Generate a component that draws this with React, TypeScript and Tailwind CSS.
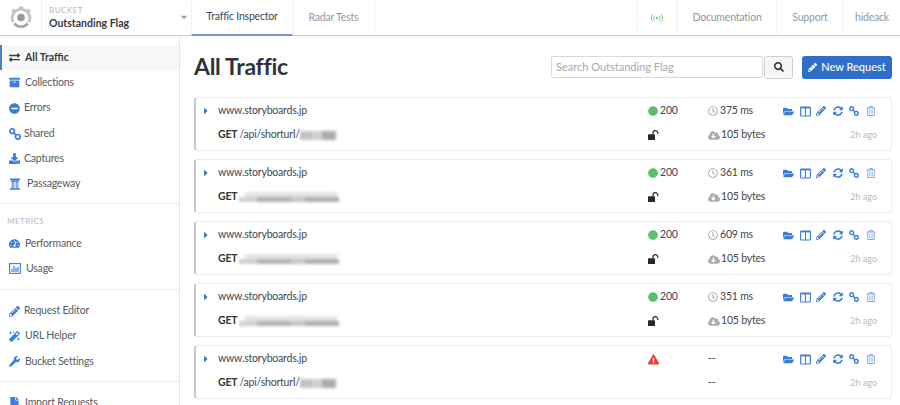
import React from "react";
import {
  FaExchangeAlt, FaArchive, FaMinusCircle, FaDownload, FaPencilAlt, FaSyncAlt,
  FaRegTrashAlt, FaFolderOpen, FaSearch, FaMagic, FaWrench, FaTachometerAlt,
  FaCloudDownloadAlt, FaRegClock, FaExclamationTriangle, FaCaretRight, FaCaretDown, FaFile, FaCircle,
} from "react-icons/fa";

function Logo() {
  return (
    <svg width="24" height="24" viewBox="0 0 24 24">
      <path d="M3.2 17 A10 10 0 0 1 3.5 6.2 L2.2 4.6 L5 2.4 L6.3 3.8 A10 10 0 0 1 9.6 2.3 L9.8 0.6 L14.2 0.6 L14.4 2.3 A10 10 0 0 1 17.7 3.8 L19 2.4 L21.8 4.6 L20.5 6.2 A10 10 0 0 1 20.8 17 L18.4 15.6 A7.4 7.4 0 1 0 5.6 15.6 Z" fill="#c4c4c1" />
      <path d="M4.2 18.4 A10.5 10.5 0 0 0 19.8 18.4 L17.8 16.6 A7.6 7.6 0 0 1 6.2 16.6 Z" fill="#a3a3a0" />
      <circle cx="12" cy="11.5" r="3.8" fill="#999996" />
    </svg>
  );
}

function Radio() {
  return (
    <svg width="12" height="10" viewBox="0 0 12 10" fill="none" stroke="#7fce8d" strokeWidth="1">
      <circle cx="6" cy="5" r="1.2" fill="#7fce8d" stroke="none" />
      <path d="M3.8 2.6a3.4 3.4 0 0 0 0 4.8M8.2 2.6a3.4 3.4 0 0 1 0 4.8M2 1a5.6 5.6 0 0 0 0 8M10 1a5.6 5.6 0 0 1 0 8" />
    </svg>
  );
}

function Chain({ size = 10 }: { size?: number }) {
  return (
    <svg width={size} height={size} viewBox="0 0 12 12" fill="none" stroke="currentColor" strokeWidth="1.7">
      <circle cx="3.2" cy="3.2" r="2.3" />
      <circle cx="8.8" cy="8.8" r="2.3" />
      <path d="M4.8 4.8l2.4 2.4" />
    </svg>
  );
}

function Cols() {
  return (
    <svg width="11" height="11" viewBox="0 0 11 11" fill="none" stroke="currentColor" strokeWidth="1.1">
      <rect x="0.6" y="1" width="9.8" height="9" rx="0.8" />
      <path d="M5.5 1v9" />
      <path d="M0.6 1.7h9.8" strokeWidth="1.4" />
    </svg>
  );
}

function Gate() {
  return (
    <svg width="12" height="12" viewBox="0 0 12 12" fill="none" stroke="currentColor" strokeWidth="1.1">
      <path d="M1 1.2h10M1 11h10M2 3h8" strokeWidth="1.4" />
      <path d="M3.2 3v8M4.8 3v8M7.2 3v8M8.8 3v8" strokeWidth="0.9" />
    </svg>
  );
}

function UsageIcon() {
  return (
    <svg width="12" height="11" viewBox="0 0 12 11" fill="none" stroke="currentColor">
      <rect x="0.6" y="0.6" width="10.8" height="9.8" strokeWidth="1.1" />
      <path d="M3 9V6M5 9V3M7 9V5M9 9V4" strokeWidth="1.2" />
    </svg>
  );
}

function OpenLock() {
  return (
    <svg width="11" height="10" viewBox="0 0 11 10" fill="#25292c">
      <rect x="0" y="4.2" width="7" height="5.8" rx="0.6" />
      <path d="M5 4.4V3a2.4 2.4 0 0 1 4.8 0v1" fill="none" stroke="#25292c" strokeWidth="1.2" />
    </svg>
  );
}

const labelCls = "text-[10.5px] tracking-[-0.2px]";

function NavItem({ icon, label, active, gap = 4 }: { icon: React.ReactNode; label: string; active?: boolean; gap?: number }) {
  return (
    <div className={`flex items-center h-[25.3px] pl-[6px] border-l-2 ${active ? "bg-[#f7f7f7] border-[#4a7fd0] font-bold text-[#333b42] text-[10.5px]" : `border-transparent text-[#555c63] ${labelCls}`}`}>
      <span className={`w-[13px] flex justify-center text-[11px] ${active ? "text-[#333b42]" : "text-[#3b7ddd]"}`}>{icon}</span>
      <span style={{ marginLeft: gap }}>{label}</span>
    </div>
  );
}

function Smudge({ short }: { short?: boolean }) {
  if (short) {
    return (
      <span className="flex h-[9px] w-[36px] blur-[1.5px] mt-[1px]">
        <span className="w-[12px] bg-[#c2c2c2]" />
        <span className="w-[10px] bg-[#d0d0d0]" />
        <span className="w-[14px] bg-[#acacac]" />
      </span>
    );
  }
  return (
    <span className="flex flex-col w-[104px] blur-[1.5px]">
      <span className="h-[5px] ml-[6px] w-[92px] bg-[#e4e4e4]" />
      <span className="flex h-[5px]">
        <span className="w-[18px] bg-[#d0d0d0]" />
        <span className="w-[34px] bg-[#b2b2b2]" />
        <span className="w-[14px] bg-[#c6c6c6]" />
        <span className="w-[34px] bg-[#aeaeae]" />
      </span>
    </span>
  );
}

function Card({ path, short, status, time, ok = true }: { path: string; short?: boolean; status?: string; time?: string; ok?: boolean }) {
  return (
    <div className={`h-[54px] shrink-0 pt-[1px] rounded-[3px] border border-[#ececec] border-l-2 border-l-[#c4c9ce] flex flex-col text-[#3f464d] ${labelCls}`}>
      <div className="flex items-center h-[24px] shrink-0">
        <FaCaretRight className="ml-[6px] w-[8px] h-[10px] text-[#2f6fc9]" />
        <span className="ml-[8px]">www.storyboards.jp</span>
        <div className="ml-auto flex items-center w-[243px]">
          <div className="w-[60px] flex items-center">
            {ok ? (
              <>
                <FaCircle className="w-[10px] h-[10px] text-[#5cbf6b]" />
                <span className="ml-[2px]">{status}</span>
              </>
            ) : (
              <FaExclamationTriangle className="w-[11px] h-[11px] text-[#e8402f]" />
            )}
          </div>
          {ok ? (
            <div className="w-[75px] flex items-center gap-[2px]">
              <FaRegClock className="w-[10px] h-[10px] text-[#a5adb3]" />
              <span>{time}</span>
            </div>
          ) : (
            <div className="w-[75px]">--</div>
          )}
          <div className="flex items-center text-[#3b7ddd]">
            <span className="w-[16.5px]"><FaFolderOpen className="w-[11px] h-[11px]" /></span>
            <span className="w-[16.5px]"><Cols /></span>
            <span className="w-[16.5px]"><FaPencilAlt className="w-[10px] h-[10px]" /></span>
            <span className="w-[16.5px]"><FaSyncAlt className="w-[10px] h-[10px]" /></span>
            <span className="w-[16.5px]"><Chain /></span>
            <span className="w-[11px]"><FaRegTrashAlt className="w-[10px] h-[10px] text-[#7ea9e0]" /></span>
          </div>
        </div>
      </div>
      <div className="flex items-center h-[24px] shrink-0">
        <span className="ml-[22px] font-bold text-[#2f353b]">GET</span>
        <span className="ml-[2px]">{path}</span>
        <Smudge short={short} />
        <div className="ml-auto flex items-center w-[243px]">
          <div className="w-[60px] flex">{ok && <OpenLock />}</div>
          {ok ? (
            <div className="w-[130px] flex items-center gap-[1px]">
              <FaCloudDownloadAlt className="w-[12px] h-[11px] text-[#a5adb3]" />
              <span>105 bytes</span>
            </div>
          ) : (
            <div className="w-[130px]">--</div>
          )}
          <span className="w-[39px] text-right text-[9px] tracking-normal text-[#b4babf]">2h ago</span>
        </div>
      </div>
    </div>
  );
}

export default function App() {
  return (
    <div className="w-[900px] h-[405px] overflow-hidden bg-white flex flex-col font-['Lato','Noto_Sans',sans-serif]">
      <header className={`h-[36px] shrink-0 flex border-b border-[#c9cdd0] ${labelCls}`}>
        <div className="w-[42px] flex items-center justify-center border-r border-[#f0f0f0]"><Logo /></div>
        <div className="w-[149px] pl-[7px] flex flex-col justify-center relative">
          <span className="text-[8px] tracking-[0.5px] text-[#b4b9be] leading-[11px]">BUCKET</span>
          <span className="font-bold text-[#33393f] leading-[14px] tracking-normal">Outstanding Flag</span>
          <FaCaretDown className="absolute right-[3px] top-[12px] w-[8px] h-[10px] text-[#a0a7ad]" />
        </div>
        <div className="w-[102px] flex items-center justify-center border-x border-[#f2f2f2] border-b-2 border-b-[#6f9bdc] h-[36px] text-[#40474e]">Traffic Inspector</div>
        <div className="w-[82px] flex items-center justify-center border-r border-[#f2f2f2] text-[#8f989f]">Radar Tests</div>
        <div className="ml-auto flex text-[#8f989f]">
          <div className="w-[41px] flex items-center justify-center border-l border-[#f2f2f2]"><Radio /></div>
          <div className="w-[99px] flex items-center justify-center border-l border-[#f2f2f2]">Documentation</div>
          <div className="w-[67px] flex items-center justify-center border-l border-[#f2f2f2]">Support</div>
          <div className="w-[57px] flex items-center justify-center border-l border-[#f2f2f2]">hideack</div>
        </div>
      </header>
      <div className="flex flex-1 min-h-0">
        <aside className="w-[180px] shrink-0 border-r border-[#e8e8e8] pt-[9px]">
          <NavItem active icon={<FaExchangeAlt />} label="All Traffic" />
          <NavItem icon={<FaArchive />} label="Collections" />
          <NavItem icon={<FaMinusCircle />} label="Errors" gap={3} />
          <NavItem icon={<Chain size={12} />} label="Shared" gap={3} />
          <NavItem icon={<FaDownload />} label="Captures" gap={3} />
          <NavItem icon={<Gate />} label="Passageway" gap={6} />
          <div className="mt-[6px] border-t border-[#ececec]" />
          <div className="pl-[7px] mt-[12px] mb-[4px] text-[8px] tracking-[0.5px] text-[#b4babf] leading-[11px]">METRICS</div>
          <NavItem icon={<FaTachometerAlt />} label="Performance" />
          <NavItem icon={<UsageIcon />} label="Usage" gap={5} />
          <div className="mt-[8px] mb-[8px] border-t border-[#ececec]" />
          <NavItem icon={<FaPencilAlt />} label="Request Editor" gap={3} />
          <NavItem icon={<FaMagic />} label="URL Helper" />
          <NavItem icon={<FaWrench />} label="Bucket Settings" />
          <div className="mt-[7px] mb-[8px] border-t border-[#ececec]" />
          <NavItem icon={<FaFile />} label="Import Requests" />
        </aside>
        <main className="flex-1 min-w-0 pl-[14px] pr-[8px] flex flex-col">
          <div className="flex items-center h-[61px] shrink-0">
            <h1 className="text-[23px] tracking-[-0.3px] font-bold text-[#2e3338]">All Traffic</h1>
            <div className="ml-auto flex items-center mt-[1px]">
              <div className="w-[212px] h-[22px] border border-[#d8d8d8] rounded-[2px] flex items-center px-[4px] text-[11px] text-[#a3aab0]">Search Outstanding Flag</div>
              <div className="ml-[1px] w-[29px] h-[23px] border border-[#cfcfcf] rounded-[3px] bg-[#f6f6f6] flex items-center justify-center">
                <FaSearch className="w-[10px] h-[10px] text-[#2b3036]" />
              </div>
              <div className="ml-[9px] w-[90px] h-[23px] bg-[#2f6fc9] rounded-[3px] text-white text-[11px] font-medium flex items-center justify-center gap-[4px]">
                <FaPencilAlt className="w-[9px] h-[9px]" />New Request
              </div>
            </div>
          </div>
          <div className="flex flex-col gap-[8px]">
            <Card path="/api/shorturl/" short status="200" time="375 ms" />
            <Card path="" status="200" time="361 ms" />
            <Card path="" status="200" time="609 ms" />
            <Card path="" status="200" time="351 ms" />
            <Card path="/api/shorturl/" short ok={false} />
          </div>
        </main>
      </div>
    </div>
  );
}
